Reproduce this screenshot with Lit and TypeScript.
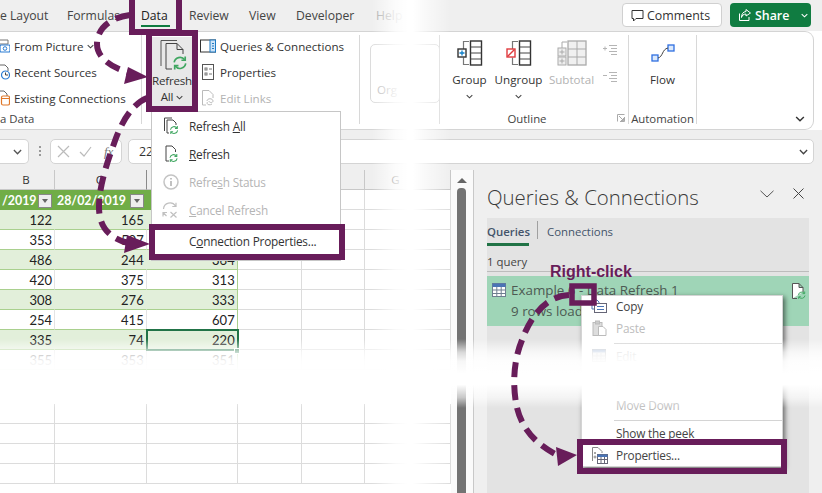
import { LitElement, html, css, svg } from "lit";
import { customElement } from "lit/decorators.js";

const PURPLE = "#681d5a";
const refreshArrows = (x: number, y: number, s: number) => svg`<g transform="translate(${x} ${y}) scale(${s})" fill="none" stroke="#3fa660" stroke-width="1.6">
  <path d="M1.5 6.5A5.6 5.6 0 0 1 11.5 4"/><path d="M12.5 7.5A5.6 5.6 0 0 1 2.5 10"/>
  <path d="M12 .8V4.4H8.4"/><path d="M2 13.2V9.6H5.6"/></g>`;
const ico = (w: number, h: number, body: unknown) =>
  html`<svg class="ico" width=${w} height=${h} viewBox="0 0 ${w} ${h}">${body}</svg>`;
const chev = (w = 7, color = "#444") =>
  html`<svg class="ico" width=${w} height=${Math.ceil(w * 0.6)} viewBox="0 0 8 5"><path d="M.8 .8 4 4 7.2 .8" fill="none" stroke=${color} stroke-width="1.2"/></svg>`;

const groupIcon = (red: boolean) => ico(26, 26, svg`
  <path d="M12 1.5H6.5V9M6.5 17.500V24.500H12" fill="none" stroke="#777" stroke-width="1.2"/>
  <rect x="13.500" y="1" width="11" height="24" fill="#fff" stroke="#333" stroke-width="1.400"/>
  <path d="M13.500 7H24.500M13.500 13H24.500M13.500 19H24.500" stroke="#444"/>
  <rect x="1" y="9" width="8" height="8" fill="#fff" stroke=${red ? "#e03a3e" : "#333"} stroke-width="1.400"/>
  ${red ? svg`<path d="M1.500 16.500 8.500 9.500" stroke="#e03a3e" stroke-width="1.400"/>` : svg`<path d="M5 10.500V15.500M2.500 13H7.500" stroke="#0f7fc9" stroke-width="1.300"/>`}
`);
const outlineMark = (plus: boolean) => ico(16, 12, svg`
  <path d="M7 1.500H15M9 4.500H15M7 7.500H15M9 10.500H15" stroke="#b5b5b5"/>
  <path d="M1 4.500H5" stroke="#b5b5b5"/>${plus ? svg`<path d="M3 2.500V6.500" stroke="#b5b5b5"/>` : ""}
`);

@customElement("app-root")
export class AppRoot extends LitElement {
  static styles = css`
    :host { display: block; width: 822px; height: 493px; }
    * { box-sizing: border-box; }
    .page { position: relative; width: 822px; height: 493px; overflow: hidden; background: #fff; display: flex; flex-direction: column;
      font-family: "Open Sans", "Noto Sans", sans-serif; font-size: 11.6px; color: #333; }
    .ico { display: block; flex: none; }
    .tabs { height: 31px; background: #efefef; display: flex; align-items: flex-start; flex: none; }
    .tabnames { display: grid; grid-template-columns: 67px 74px 48px 60px 47px 80px 60px; height: 30px; align-items: center; font-size: 12.200px; color: #444; }
    .tabnames .on { color: #222; align-self: start; justify-self: start; width: 29px; height: 27px; padding-top: 6px; line-height: 19px; border-bottom: 2px solid #107c41; }
    .tabnames .pale { color: #aaa; }
    .tabright { margin-left: auto; display: flex; gap: 8px; padding: 3px 11px 0 0; }
    .btn { height: 24px; border-radius: 4px; display: flex; align-items: center; font-size: 12.400px; }
    .comments { width: 100px; background: #fff; border: 1px solid #d0d0d0; padding-left: 8px; gap: 3px; color: #333; }
    .share { width: 81px; background: #107c41; color: #fff; padding-left: 8px; gap: 3px; font-weight: 600; }
    .share .ico:last-child { margin-left: 9px; }
    .ribbon { height: 99px; flex: none; width: 814px; background: #fff; border: 1px solid #d4d4d4; border-left: 0; border-radius: 0 9px 9px 0; display: flex; padding-top: 3px; }
    .rgroup { height: 89px; display: flex; flex-direction: column; border-right: 1px solid #d8d8d8; flex: none; }
    .rbody { height: 79px; display: flex; }
    .rlabel { text-align: center; font-size: 11.400px; line-height: 11px; color: #444; position: relative; }
    .list { display: flex; flex-direction: column; margin-top: -2px; }
    .li { height: 26px; display: flex; align-items: center; gap: 4px; white-space: nowrap; font-size: 11.600px; color: #333; }
    .li.off { color: #b3b3b3; }
    .gA { width: 142px; }
    .gA .rlabel { text-align: left; }
    .gB { width: 218px; padding-left: 10px; }
    .gB .rbody { gap: 8px; }
    .refresh { width: 40px; display: flex; flex-direction: column; align-items: center; background: #e8e8e8; margin-top: 2px; height: 70px; padding-top: 2px; line-height: 16px; color: #333; letter-spacing: -.2px; }
    .refresh span { display: flex; align-items: center; gap: 3px; }
    .gC { width: 80px; padding: 9px 0 0 10px; }
    .orgbox { width: 70px; height: 59px; border: 1px solid #dcdcdc; border-radius: 5px; display: flex; align-items: flex-end; padding: 0 0 5px 6px; color: #bbb; }
    .gD { width: 189px; }
    .gD .rbody { padding-left: 5px; }
    .gD .rlabel { padding-right: 14px; }
    .bigbtn { width: 49px; display: flex; flex-direction: column; align-items: center; padding-top: 5px; color: #333; white-space: nowrap; }
    .bigbtn.off { color: #b3b3b3; margin-left: 4px; }
    .bigbtn .cap { margin-top: 6px; line-height: 16px; }
    .bigbtn .sub { margin-top: 6px; }
    .marks { display: flex; flex-direction: column; gap: 15px; padding: 9px 0 0 6px; }
    .launch { position: absolute; right: 3px; top: 1px; }
    .gE { width: 68px; }
    .gE .bigbtn { width: 68px; padding-top: 9px; }
    .gE .bigbtn .cap { margin-top: 10px; }
    .grest { flex: 1; display: flex; align-items: flex-end; justify-content: flex-end; padding: 0 8px 7px 0; }
    .fbar { height: 40px; flex: none; background: #efefef; display: flex; padding-top: 9px; }
    .fbox { height: 25px; background: #fff; border: 1px solid #d4d4d4; border-radius: 5px; display: flex; align-items: center; flex: none; }
    .namebox { width: 29px; border-left: 0; border-radius: 0 5px 5px 0; justify-content: flex-end; padding-right: 6px; }
    .dots { width: 21px; display: flex; flex-direction: column; gap: 2px; align-items: center; padding-top: 7px; flex: none; }
    .dots i { width: 2px; height: 2px; background: #999; display: block; }
    .fx { width: 72px; gap: 9px; padding-left: 6px; font-family: "Liberation Serif", serif; font-style: italic; color: #777; font-size: 13px; }
    .fx span { margin-left: 3px; }
    .finput { width: 686px; margin-left: 6px; padding: 0 5px 0 10px; justify-content: space-between; font-size: 12.400px; }
    .main { flex: 1; display: flex; min-height: 0; }
    .sheet { width: 451px; flex: none; }
    .sheetrow { display: grid; grid-template-columns: 55px 91.700px 91px 64px 63.500px 1fr; height: 20px; }
    .sheetrow.head { height: 20px; background: #efefef; }
    .cell { border-right: 1px solid #dcdcdc; border-bottom: 1px solid #dcdcdc; text-align: right; padding-right: 2px; font-family: Lato, sans-serif; font-size: 13px; line-height: 21px; color: #222; white-space: nowrap; overflow: hidden; position: relative; }
    .head .cell { text-align: center; font-family: "Open Sans", sans-serif; font-size: 11.500px; line-height: 20px; border-bottom: 1px solid #c8c8c8; border-right-color: #c8c8c8; color: #333; }
    .head .cell.sel { border-right-color: #8a8a8a; }
    .head .cell.ghost { text-align: left; padding-left: 26px; }
    .t { border-right-color: #e4e4e4; border-bottom-color: #a9d08e; }
    .t.alt { background: #e2efda; border-right-color: #e2efda; }
    .t.end { border-right-color: #a9d08e; }
    .t.th { background: #70ad47; color: #fff; font-weight: 700; text-align: left; padding: 1px 0 0 2px; line-height: 18px; border-bottom: 0; border-right: 0; display: flex; align-items: center; justify-content: space-between; font-size: 12.400px; }
    .filter { width: 14px; height: 14px; background: #eee; border: 1px solid #888; display: flex; align-items: center; justify-content: center; flex: none; margin-right: 3px; }
    .filter::after { content: ""; border: 3.500px solid transparent; border-top: 4px solid #666; border-bottom: 0; }
    .selcell { outline: 2px solid #217346; outline-offset: -1px; z-index: 1; }
    .handle { position: absolute; left: 234px; top: 178px; width: 6px; height: 6px; background: #217346; border: 1px solid #fff; z-index: 1; }
    .gap { height: 34px; }
    .sheetwrap { position: relative; }
    .sb { width: 23px; flex: none; display: flex; flex-direction: column; align-items: center; padding: 8px 1px 0 0; border-right: 1px solid #c8c8c8; gap: 5px; background: #fafafa; }
    .sb .up { border: 5px solid transparent; border-bottom: 5px solid #666; border-top: 0; }
    .sb .thumb { width: 9px; flex: 1; background: #737373; border-radius: 4px 4px 0 0; }
    .pane { flex: 1; background: #efefef; display: flex; flex-direction: column; padding: 0 13px; }
    .ptitle { height: 48px; flex: none; display: flex; align-items: center; padding-top: 6px; font-size: 20.400px; font-weight: 300; color: #3a3a3a; }
    .pctrls { margin-left: auto; display: flex; gap: 19px; align-items: center; margin-top: -7px; margin-right: 5px; }
    .pbody { flex: 1; background: #e3e3e3; display: flex; flex-direction: column; }
    .ptabs { height: 28px; flex: none; display: flex; align-items: center; font-size: 11.400px; color: #44546a; }
    .ptabs .q { height: 28px; line-height: 27px; border-bottom: 3px solid #217346; font-weight: 600; width: 42px; white-space: nowrap; }
    .ptabs .bar { width: 1px; height: 18px; background: #a0a0a0; margin: -4px 9px 0 8px; }
    .ptabs .c { margin-top: -2px; }
    .pcount { height: 26px; flex: none; border-bottom: 1px solid #bcbcbc; display: flex; align-items: center; font-size: 11.400px; color: #444; padding-top: 6px; }
    .qrow { margin-top: 4px; height: 50px; flex: none; background: #9fd5b7; display: grid; grid-template-columns: 19px 1fr 18px; padding: 4px 0 0 5px; color: #4d5a53; font-size: 13.400px; line-height: 21px; white-space: nowrap; }
    .qrow .ico { margin-top: 3px; }
    .menu { position: absolute; background: #fff; display: flex; flex-direction: column; z-index: 2; }
    .m1 { left: 151px; top: 111px; width: 190px; height: 150px; border: 1px solid #c6c6c6; }
    .mi { height: 28px; flex: none; display: flex; align-items: center; font-size: 11.800px; letter-spacing: -.2px; color: #333; white-space: nowrap; padding-bottom: 1px; }
    .mi .slot { width: 37px; display: flex; justify-content: center; flex: none; }
    .mi.off { color: #b5b5b5; }
    .mi.big { height: 36px; padding-bottom: 3px; }
    .m2 { left: 581px; top: 295px; width: 202px; height: 172px; box-shadow: 2px 2px 5px rgba(0,0,0,.55); border: 1px solid #d4d4d4; }
    .ci { height: 22px; flex: none; display: flex; align-items: center; font-size: 11.800px; letter-spacing: -.2px; color: #444; white-space: nowrap; padding-bottom: 2px; }
    .ci .slot { width: 34px; display: flex; justify-content: center; flex: none; }
    .ci.off { color: #bdbdbd; }
    .ci.blank { height: 27px; }
    .csep { height: 6px; flex: none; display: flex; align-items: center; padding-left: 32px; }
    .csep::after { content: ""; display: block; width: 100%; height: 1px; background: #d4d4d4; }
    .fadeV { position: absolute; left: 0; right: 0; top: 339px; height: 69px; z-index: 3; pointer-events: none;
      background: linear-gradient(to bottom, rgba(255,255,255,0) 0%, rgba(255,255,255,.72) 19%, rgba(255,255,255,.94) 32%, #fff 50%, #fff 66%, rgba(255,255,255,.6) 85%, rgba(255,255,255,0) 100%); }
    .fadeH { position: absolute; left: 372px; width: 78px; top: 0; bottom: 0; z-index: 1; pointer-events: none;
      background: linear-gradient(to right, rgba(255,255,255,0) 0%, rgba(255,255,255,.8) 30%, #fff 46%, #fff 52%, rgba(255,255,255,.55) 72%, rgba(255,255,255,0) 100%); }
    .notes { position: absolute; inset: 0; z-index: 4; pointer-events: none; }
    .rc { position: absolute; left: 550px; top: 263px; z-index: 5; font-family: "Liberation Sans", Arial, sans-serif; font-weight: 700; font-size: 16px; line-height: 18px; color: #681d5a; white-space: nowrap; }
  `;

  private row(cells: string[], alt: boolean) {
    return html`<div class="sheetrow">
      <div class="cell t ${alt ? "alt" : ""}">${cells[0]}</div>
      <div class="cell t ${alt ? "alt" : ""}">${cells[1]}</div>
      <div class="cell t end ${alt ? "alt" : ""}">${cells[2]}</div>
      <div class="cell"></div><div class="cell"></div><div class="cell"></div>
    </div>`;
  }

  render() {
    const data = [["122", "165", ""], ["353", "507", ""], ["486", "244", "364"], ["420", "375", "313"], ["308", "276", "333"], ["254", "415", "607"]];
    const blank = html`<div class="sheetrow"><div class="cell"></div><div class="cell"></div><div class="cell"></div><div class="cell"></div><div class="cell"></div><div class="cell"></div></div>`;
    return html`<div class="page">
      <div class="tabs">
        <div class="tabnames">
          <span>e Layout</span><span>Formulas</span><span class="on">Data</span><span>Review</span><span>View</span><span>Developer</span><span class="pale">Help</span>
        </div>
        <div class="tabright">
          <div class="btn comments">
            ${ico(13, 13, svg`<path d="M1 1.500H12V9.500H5L2.500 12V9.500H1Z" fill="none" stroke="#333"/>`)}<span>Comments</span>
          </div>
          <div class="btn share">
            ${ico(14, 14, svg`<path d="M1.500 5.500V12.500H11V9M8 1.500 12.500 5 8 8V6C5.500 6 4 7.500 3.500 9.500 3.500 6 5 3.800 8 3.500Z" fill="none" stroke="#fff"/>`)}<span>Share</span>${chev(7, "#fff")}
          </div>
        </div>
      </div>

      <div class="ribbon">
        <div class="rgroup gA">
          <div class="rbody"><div class="list">
            <div class="li">${ico(10, 16, svg`<path d="M0 2H8V6M0 6H8" stroke="#777" fill="none"/><rect x="0" y="7" width="10" height="7" rx="1" fill="#fff" stroke="#2b7cd3" stroke-width="1.200"/><circle cx="5" cy="10.500" r="1.800" fill="none" stroke="#2b7cd3"/>`)}<span>From Picture</span>${chev()}</div>
            <div class="li">${ico(10, 16, svg`<path d="M0 1H5L8 4V7" stroke="#666" fill="none"/><circle cx="5.500" cy="11" r="4" fill="#fff" stroke="#2b7cd3" stroke-width="1.200"/><path d="M5.500 8.500V11H8" stroke="#444" fill="none"/>`)}<span>Recent Sources</span></div>
            <div class="li">${ico(10, 16, svg`<path d="M0 1H4L7 4V6" stroke="#666" fill="none"/><rect x="1.500" y="6" width="8" height="9" rx="1.500" fill="#fff" stroke="#e0792b" stroke-width="1.200"/><path d="M1.500 8.500H9.500" stroke="#e0792b"/>`)}<span>Existing Connections</span></div>
          </div></div>
          <div class="rlabel">a Data</div>
        </div>

        <div class="rgroup gB">
          <div class="rbody">
            <div class="refresh">
              ${ico(30, 34, svg`<path d="M4 27V1.500H20" fill="none" stroke="#555"/><path d="M9 30V4.500H20L26 10.500V15M9 30H15" fill="none" stroke="#444"/><path d="M20 4.500V10.500H26" fill="none" stroke="#444"/>${refreshArrows(15.600, 16.600, 1.050)}`)}
              <span>Refresh</span><span>All ${chev()}</span>
            </div>
            <div class="list">
              <div class="li">${ico(16, 14, svg`<rect x=".500" y="1" width="15" height="12" fill="#fff" stroke="#333"/><rect x="10" y="1" width="5.500" height="12" fill="#cfe4f7" stroke="#1f7bc4"/><path d="M12 4.500H14M12 7H14M12 9.500H14" stroke="#1f7bc4"/>`)}<span>Queries &amp; Connections</span></div>
              <div class="li">${ico(16, 16, svg`<rect x="2.500" y=".500" width="11" height="15" fill="#fff" stroke="#555"/><rect x="5" y="4" width="2" height="2" fill="none" stroke="#777"/><rect x="5" y="9" width="2" height="2" fill="none" stroke="#777"/><path d="M9 5H12M9 10H12" stroke="#777"/>`)}<span>Properties</span></div>
              <div class="li off">${ico(16, 16, svg`<path d="M2.500 15V.500H9L13 4.500V8M2.500 15H6" fill="none" stroke="#bbb"/><path d="M7 11C7 8 13 8 13 11 13 13 9 13 9 11M12 14C9 16 6 14 7.500 12" fill="none" stroke="#bbb"/>`)}<span>Edit Links</span></div>
            </div>
          </div>
        </div>

        <div class="rgroup gC"><div class="orgbox">Org</div></div>

        <div class="rgroup gD">
          <div class="rbody">
            <div class="bigbtn">${groupIcon(false)}<span class="cap">Group</span><span class="sub">${chev()}</span></div>
            <div class="bigbtn">${groupIcon(true)}<span class="cap">Ungroup</span><span class="sub">${chev()}</span></div>
            <div class="bigbtn off">${ico(30, 26, svg`<path d="M10 2H5V8" fill="none" stroke="#aaa"/><rect x="1" y="8" width="8" height="8" fill="#eee" stroke="#aaa"/><rect x="1" y="17" width="8" height="8" fill="#eee" stroke="#aaa"/><path d="M5 9.500V14.500M2.500 12H7.500M5 18.500V23.500M2.500 21H7.500" stroke="#aaa"/><rect x="11" y="1" width="18" height="24" fill="#f0f0f0" stroke="#aaa" stroke-width="1.300"/><path d="M11 9H29M11 17H29M20 1V25" stroke="#aaa"/>`)}<span class="cap">Subtotal</span></div>
            <div class="marks">${outlineMark(true)}${outlineMark(false)}</div>
          </div>
          <div class="rlabel">Outline
            <svg class="launch" width="8" height="8" viewBox="0 0 8 8"><path d="M.5 7.500V.5H7.500M7.500 3V7.500H3M2 2 6.500 6.500M6.500 4V6.500H4" fill="none" stroke="#aaa"/></svg>
          </div>
        </div>

        <div class="rgroup gE">
          <div class="rbody"><div class="bigbtn">
            ${ico(24, 18, svg`<rect x="1" y="11" width="6" height="6" fill="#dbe9fb" stroke="#2f6fe0" stroke-width="1.300"/><rect x="17" y="1" width="6" height="6" fill="#dbe9fb" stroke="#2f6fe0" stroke-width="1.300"/><path d="M7 14C12 13 11 5 17 4" fill="none" stroke="#444"/>`)}
            <span class="cap">Flow</span>
          </div></div>
          <div class="rlabel">Automation</div>
        </div>

        <div class="grest">${chev(10, "#333")}</div>
      </div>

      <div class="fbar">
        <div class="fbox namebox">${chev(9, "#555")}</div>
        <div class="dots"><i></i><i></i><i></i></div>
        <div class="fbox fx">
          ${ico(13, 13, svg`<path d="M1 1 12 12M12 1 1 12" stroke="#bbb" stroke-width="1.200"/>`)}
          ${ico(13, 13, svg`<path d="M1 7 5 11 12 2" fill="none" stroke="#bbb" stroke-width="1.200"/>`)}
          <span>fx</span>
        </div>
        <div class="fbox finput"><span>22</span>${chev(9, "#444")}</div>
      </div>

      <div class="main">
        <div class="sheet sheetwrap">
          <div class="sheetrow head"><div class="cell">B</div><div class="cell sel">C</div><div class="cell"></div><div class="cell"></div><div class="cell"></div><div class="cell ghost">G</div></div>
          <div class="sheetrow">
            <div class="cell t th"><span>/2019</span><i class="filter"></i></div>
            <div class="cell t th"><span>28/02/2019</span><i class="filter"></i></div>
            <div class="cell t th"></div>
            <div class="cell"></div><div class="cell"></div><div class="cell"></div>
          </div>
          ${data.map((r, i) => this.row(r, i % 2 === 0))}
          <div class="sheetrow">
            <div class="cell t alt">335</div><div class="cell t alt">74</div><div class="cell t end alt selcell">220</div>
            <div class="cell"></div><div class="cell"></div><div class="cell"></div>
          </div>
          <div class="handle"></div>
          ${this.row(["355", "353", "351"], false)}
          <div class="gap"></div>
          ${blank}${blank}${blank}${blank}
        </div>
        <div class="sb"><i class="up"></i><i class="thumb"></i></div>
        <div class="pane">
          <div class="ptitle">Queries &amp; Connections
            <div class="pctrls">
              ${ico(14, 8, svg`<path d="M.5 .8 7 7 13.500 .8" fill="none" stroke="#555"/>`)}
              ${ico(11, 11, svg`<path d="M.5 .5 10.500 10.500M10.500 .5 .5 10.500" stroke="#444"/>`)}
            </div>
          </div>
          <div class="pbody">
            <div class="ptabs"><div class="q">Queries</div><i class="bar"></i><div class="c">Connections</div></div>
            <div class="pcount">1 query</div>
            <div class="qrow">
              ${ico(14, 14, svg`<rect x=".500" y=".500" width="13" height="13" fill="#fff" stroke="#6f7f90"/><rect x=".500" y=".500" width="13" height="3.500" fill="#4a74b5"/><path d="M.5 7H13.500M.5 10.500H13.500M4.800 4V13.500M9.200 4V13.500" stroke="#6f7f90"/>`)}
              <div>Example 6 - Data Refresh 1<br />9 rows loaded.</div>
              ${ico(15, 17, svg`<path d="M1.500 15.500V.5H8L12 4.500V9M1.500 15.500H6M8 .5V4.500H12" fill="#fff" stroke="#555"/>${refreshArrows(6.500, 8, 0.6)}`)}
            </div>
          </div>
        </div>
      </div>

      <div class="menu m1">
        <div class="mi"><span class="slot">${ico(16, 17, svg`<path d="M1.500 14V1H9" fill="none" stroke="#444"/><path d="M4 16V3H10L13 6V8M4 16H6" fill="none" stroke="#444"/>${refreshArrows(6.500, 8.500, 0.65)}`)}</span><span>Refresh <u>A</u>ll</span></div>
        <div class="mi"><span class="slot">${ico(16, 17, svg`<path d="M3 16V1H9L12.500 4.500V7M3 16H6" fill="none" stroke="#444"/>${refreshArrows(6, 8.500, 0.65)}`)}</span><span><u>R</u>efresh</span></div>
        <div class="mi off"><span class="slot">${ico(16, 16, svg`<circle cx="8" cy="8" r="7" fill="none" stroke="#c4c4c4" stroke-width="1.500"/><path d="M8 7V12M8 4V5.500" stroke="#bbb" stroke-width="1.800"/>`)}</span><span>Refre<u>s</u>h Status</span></div>
        <div class="mi off"><span class="slot">${ico(17, 16, svg`<path d="M1.500 7A6.500 6.500 0 0 1 13.500 4M14 .8V4.500H10.300" fill="none" stroke="#c0c0c0" stroke-width="1.200"/><path d="M1 14.500V10.500H5M1 10.500 4.500 14M8.500 10 14.500 15.500M14.500 10 8.500 15.500" fill="none" stroke="#c0c0c0" stroke-width="1.200"/>`)}</span><span><u>C</u>ancel Refresh</span></div>
        <div class="mi big"><span class="slot"></span><span>C<u>o</u>nnection Properties...</span></div>
      </div>

      <div class="menu m2">
        <div class="ci"><span class="slot">${ico(16, 14, svg`<path d="M1 1H6L8 3V4M1 1V10H3" fill="none" stroke="#4a74b5"/><rect x="3.500" y="4.500" width="12" height="9" fill="#fff" stroke="#667"/><path d="M6 7.500H13M6 10.500H13" stroke="#4a74b5"/>`)}</span><span>Copy</span></div>
        <div class="ci off"><span class="slot">${ico(15, 16, svg`<rect x="1" y="2.500" width="9" height="13" fill="#ddd" stroke="#bbb"/><rect x="3.500" y="1" width="4" height="3" fill="#ccc" stroke="#bbb"/><path d="M6.500 6.500H11L14 9.500V15.500H6.500Z" fill="#fff" stroke="#bbb"/>`)}</span><span>Paste</span></div>
        <div class="csep"></div>
        <div class="ci off"><span class="slot">${ico(15, 14, svg`<rect x=".5" y=".5" width="13" height="12" fill="#eee" stroke="#bbb"/><rect x=".5" y=".5" width="13" height="3" fill="#a9bcd8"/><path d="M.5 7H13.500M.5 10H13.500M5 4V12.500M9 4V12.500" stroke="#ccc"/>`)}</span><span>Edit</span></div>
        <div class="ci blank"></div>
        <div class="ci off"><span class="slot"></span><span>Move Down</span></div>
        <div class="csep"></div>
        <div class="ci"><span class="slot"></span><span>Show the peek</span></div>
        <div class="ci"><span class="slot">${ico(17, 17, svg`<path d="M1.500 14V.5H7L11 4.500V6" fill="none" stroke="#888"/><circle cx="4" cy="6" r="1" fill="#888"/><circle cx="4" cy="10" r="1" fill="none" stroke="#888"/><rect x="6.500" y="7.500" width="10" height="9" fill="#fff" stroke="#667"/><rect x="6.500" y="7.500" width="10" height="2.500" fill="#4a74b5"/><path d="M6.500 12.500H16.500M10 10V16.500M13.500 10V16.500" stroke="#667"/>`)}</span><span>Properties...</span></div>
      </div>

      <div class="fadeH"></div>
      <div class="fadeV"></div>

      <svg class="notes" width="822" height="493" viewBox="0 0 822 493" fill="none" stroke=${PURPLE}>
        <g stroke-width="6">
          <rect x="132" y="-3" width="47" height="35"/>
          <rect x="149" y="33" width="46" height="76"/>
          <rect x="152" y="227" width="190" height="30"/>
          <rect x="580" y="442" width="204" height="29"/>
          <rect x="572" y="286" width="22" height="17" stroke-width="5.500"/>
        </g>
        <g stroke-width="6" stroke-dasharray="15 8">
          <path d="M130 15C108 18 97 30 97 44C97 58 112 68 130 73"/>
          <path d="M147 98C132 104 122 122 116 138C108 160 99 185 99 207C99 224 106 237 128 243"/>
          <path d="M569 295C545 296 530 318 522 340C513 362 513 385 516 403C520 425 532 442 557 455"/>
        </g>
        <g fill=${PURPLE} stroke="none">
          <path d="M148 77 128 67 124 84Z"/>
          <path d="M150 244 127 235 124 253Z"/>
          <path d="M577 455 556 447 558 466Z"/>
        </g>
      </svg>
      <div class="rc">Right-click</div>
    </div>`;
  }
}
